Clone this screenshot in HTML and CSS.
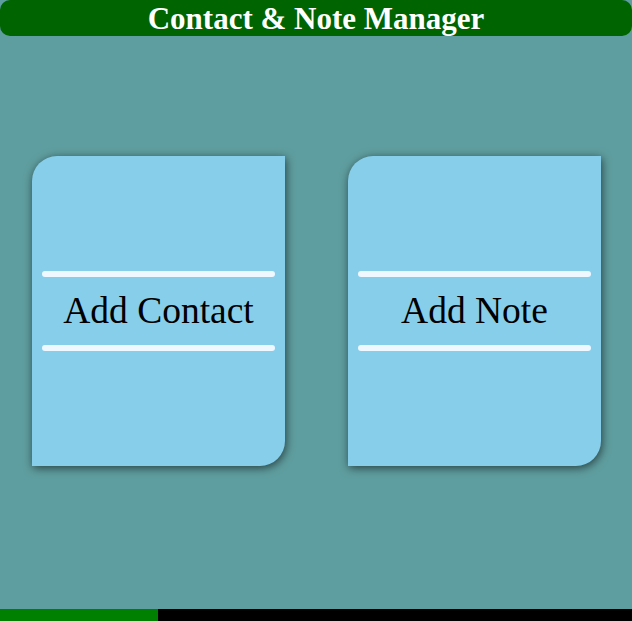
FILE: index.html
```html
<!DOCTYPE html>
<html lang="en">
<head>
<meta charset="utf-8">
<title>Contact &amp; Note Manager</title>
<link rel="stylesheet" href="styles.css">
</head>
<body>
  <header class="topbar">
    <h1 class="title">Contact &amp; Note Manager</h1>
  </header>
  <main class="board">
    <div class="card">
      <div class="rule"></div>
      <div class="label">Add Contact</div>
      <div class="rule"></div>
    </div>
    <div class="card">
      <div class="rule"></div>
      <div class="label">Add Note</div>
      <div class="rule"></div>
    </div>
  </main>
  <div class="progress">
    <div class="progress-fill" style="width: 25%"></div>
  </div>
</body>
</html>
```

FILE: styles.css
```css
html, body {
  margin: 0;
  padding: 0;
  height: 100%;
}
body {
  background: #5F9EA0;
  font-family: "Liberation Serif", "Times New Roman", serif;
  display: flex;
  flex-direction: column;
  overflow: hidden;
}
.topbar {
  background: #006400;
  height: 36px;
  border-radius: 10px;
  flex: none;
}
.title {
  margin: 0;
  color: #ffffff;
  font-size: 31px;
  font-weight: bold;
  line-height: 37px;
  text-align: center;
}
.board {
  flex: 1;
  display: flex;
  align-items: flex-start;
  gap: 63px;
  padding: 120px 0 0 32px;
}
.card {
  width: 253px;
  height: 310px;
  box-sizing: border-box;
  padding: 0 10px;
  background: #87CEEB;
  border-radius: 25px 0 25px 0;
  box-shadow: 1px 2px 10px rgba(0, 0, 0, 0.6);
  display: flex;
  flex-direction: column;
  justify-content: center;
}
.rule {
  height: 6px;
  border-radius: 3px;
  background: #F0F8FF;
}
.label {
  font-size: 37.5px;
  line-height: 42px;
  padding: 13px 0;
  text-align: center;
  color: #000000;
}
.progress {
  flex: none;
  height: 12px;
  background: #000000;
}
.progress-fill {
  height: 100%;
  background: #008000;
}
```
